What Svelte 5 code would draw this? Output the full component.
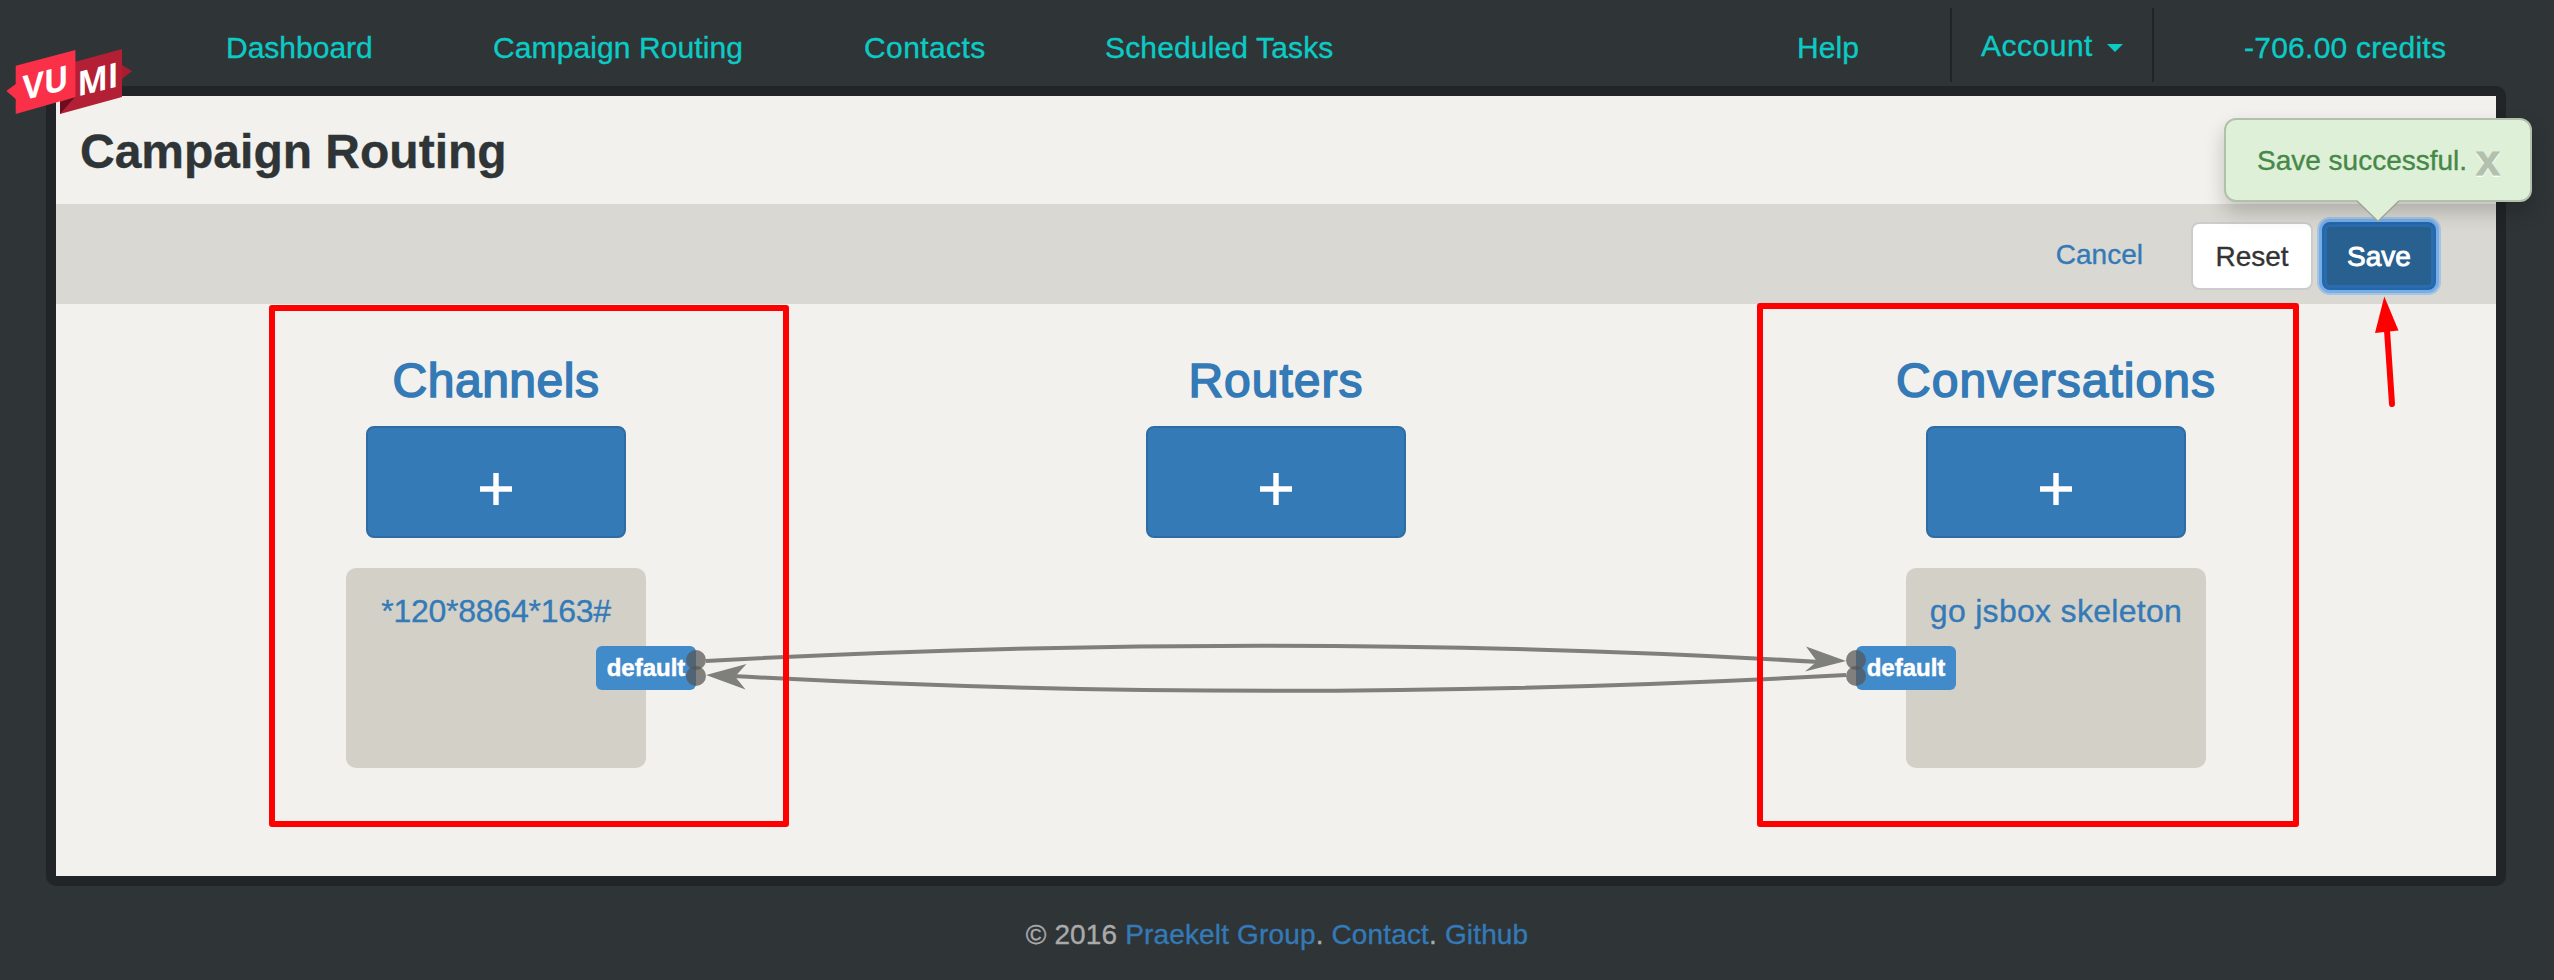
<script>
  const links = [
    { label: 'Dashboard', cls: 'dash' },
    { label: 'Campaign Routing', cls: 'camp' },
    { label: 'Contacts', cls: 'cont' },
    { label: 'Scheduled Tasks', cls: 'tasks' }
  ];
  const columns = [
    { title: 'Channels', node: '*120*8864*163#', side: 'right' },
    { title: 'Routers' },
    { title: 'Conversations', node: 'go jsbox skeleton', side: 'left' }
  ];
</script>

<div class="page">
  <header>
    <svg class="logo" width="140" height="80" viewBox="0 40 140 80">
      <path d="M122 65L132 71L122 79Z" fill="#a81e30" />
      <path d="M60 66L122 49V97L60 114Z" fill="#b32035" />
      <path d="M60 102L75 97L60 114Z" fill="#6b0f20" />
      <path d="M15.7 65.7L75.4 50V97L15.7 114V99L6.4 91L15.7 84Z" fill="#fa3049" />
      <text transform="matrix(1 -.25 0 1 22.5 100.5)" font-size="34" textLength="46" lengthAdjust="spacingAndGlyphs">VU</text>
      <text transform="matrix(1 -.25 0 1 77.5 96.5)" font-size="34" textLength="41" lengthAdjust="spacingAndGlyphs">MI</text>
    </svg>
    <nav class="main">
      {#each links as l}<a class={l.cls}>{l.label}</a>{/each}
    </nav>
    <nav class="side">
      <a class="help">Help</a>
      <div class="account">Account<span class="caret"></span></div>
      <a class="credits">-706.00 credits</a>
    </nav>
  </header>

  <main>
    <h1>Campaign Routing</h1>
    <div class="toolbar">
      <a class="cancel">Cancel</a>
      <button class="reset">Reset</button>
      <button class="save">Save</button>
      <div class="popover">
        <span>Save successful.</span><b>x</b>
        <svg class="tip" width="42" height="22" viewBox="0 0 42 22"><path d="M0 0L21 21L42 0Z" fill="#dff0d8" /><path d="M0 1L21 21.3L42 1" fill="none" stroke="#a0a59b" stroke-width="1.3" /></svg>
      </div>
    </div>
    <div class="canvas">
      {#each columns as c}
        <section class={c.title.toLowerCase()}>
          <h2>{c.title}</h2>
          <button class="add" aria-label="Add"><svg width="32" height="32"><path d="M0 16H32M16 0V32" stroke="#fff" stroke-width="5.4" /></svg></button>
          {#if c.node}
            <div class="node">
              <span>{c.node}</span>
              <div class="port {c.side}">default</div>
            </div>
          {/if}
        </section>
      {/each}
    </div>
  </main>

  <footer>© 2016 <a>Praekelt Group</a>. <a>Contact</a>. <a>Github</a></footer>

  <svg class="overlay" width="2554" height="980" viewBox="0 0 2554 980">
    <g fill="none" stroke="#7f7f7c" stroke-width="4">
      <path d="M706 661Q1276 630 1820 662" />
      <path d="M1846 675Q1276 706 732 676" />
    </g>
    <g fill="#7f7f7c">
      <path d="M706 675L746.5 664L735 676.5L745.5 689.5Z" />
      <path d="M1846 661L1806 646.5L1817 661.5L1805 671.5Z" />
    </g>
    <g fill="#555" fill-opacity=".72">
      <circle cx="696" cy="660" r="10" /><circle cx="696" cy="676" r="10" />
      <circle cx="1856" cy="660" r="10" /><circle cx="1856" cy="676" r="10" />
    </g>
    <g fill="none" stroke="#f00" stroke-width="6" stroke-linejoin="round">
      <rect x="272" y="308" width="514" height="516" />
      <rect x="1760" y="306" width="536" height="518" />
      <path d="M2387 330L2392 404" stroke-linecap="round" />
    </g>
    <path d="M2384.3 296.5L2398.5 330.5L2375 333Z" fill="#f00" />
  </svg>
</div>

<style>
  :global(body) { background: #2f3437; }
  .page { position: relative; width: 2554px; height: 980px; overflow: hidden; background: #2f3437; font-family: "Liberation Sans", Arial, sans-serif; font-size: 28px; line-height: 40px; color: #333; -webkit-text-stroke: .35px currentColor; }
  a { color: #337ab7; }
  button { font: inherit; }
  header { height: 86px; display: flex; justify-content: space-between; font-size: 30px; }
  header a, .account { color: #0ccbc5; white-space: nowrap; }
  .logo { position: absolute; left: 0; top: 40px; z-index: 3; fill: #fff; font-weight: bold; font-family: "Open Sans", sans-serif; -webkit-text-stroke: 0; }
  .main { display: flex; padding: 28px 0 0 226px; }
  .dash { width: 267px; }
  .camp { width: 371px; letter-spacing: .1px; }
  .cont { width: 241px; letter-spacing: .4px; }
  .tasks { letter-spacing: .15px; }
  .side { display: flex; }
  .side a { padding-top: 28px; }
  .help { width: 153px; letter-spacing: .1px; }
  .account { box-sizing: border-box; margin-top: 8px; height: 74px; width: 204px; border: solid #212528; border-width: 0 2px; padding: 18px 0 0 29px; display: flex; letter-spacing: .5px; }
  .caret { margin: 18px 0 0 14px; width: 0; height: 0; border: 8px solid transparent; border-top-color: #0ccbc5; border-bottom: 0; }
  .credits { width: 400px; box-sizing: border-box; padding-left: 90px; letter-spacing: .25px; }
  main { box-sizing: border-box; margin: 0 48px 0 46px; height: 800px; border: 10px solid #212528; border-radius: 10px; background: #f2f1ed; }
  h1 { margin: 0; height: 108px; box-sizing: border-box; padding: 29px 0 0 24px; font-size: 48px; line-height: 53px; color: #2f3437; }
  .toolbar { position: relative; height: 100px; box-sizing: border-box; background: #d9d8d2; display: flex; justify-content: flex-end; padding: 18px 60px 0 0; }
  .cancel { margin: 13px 48px 0 0; }
  .toolbar button { box-sizing: border-box; height: 68px; border: 2px solid #ccc; border-radius: 8px; padding: 1px 0 0; -webkit-text-stroke: .35px currentColor; }
  .reset { width: 122px; background: #fff; color: #333; margin-right: 9px; }
  .toolbar .save { width: 114px; background: #286090; border-color: #2467ad; color: #fff; -webkit-text-stroke: .9px #fff; box-shadow: inset 0 0 0 3px #2a6cae, 0 0 0 3px #76aeea, 0 0 0 5px rgba(118, 174, 234, .5); }
  .popover { position: absolute; z-index: 5; left: 2168px; top: -86px; width: 308px; height: 84px; box-sizing: border-box; border: 2px solid #b2c0ac; border-radius: 12px; background: #dff0d8; color: #468847; padding: 21px 0 0 31px; display: flex; box-shadow: 0 10px 20px rgba(0, 0, 0, .2); }
  .popover b { font-size: 43px; line-height: 38px; margin-left: 9px; color: #b2c0ad; text-shadow: 0 2px #fff; -webkit-text-stroke: .8px #b2c0ad; }
  .tip { position: absolute; left: 131px; top: 80px; }
  .canvas { display: grid; grid-template-columns: repeat(3, 780px); justify-content: center; }
  section { display: flex; flex-direction: column; align-items: center; padding-top: 50px; }
  h2 { margin: 0; height: 72px; font-size: 48px; line-height: 53px; font-weight: 400; color: #337ab7; letter-spacing: 1px; -webkit-text-stroke: 1.6px #337ab7; }
  .channels h2 { letter-spacing: .5px; }
  .add { box-sizing: border-box; width: 260px; height: 112px; padding: 13px 0 0; border: 2px solid #2e6da4; border-radius: 8px; background: #337ab7; display: flex; align-items: center; justify-content: center; }
  .node { position: relative; margin-top: 30px; width: 300px; height: 200px; box-sizing: border-box; padding-top: 23px; border-radius: 10px; background: #d3d0c8; color: #337ab7; font-size: 32px; text-align: center; white-space: nowrap; }
  .channels .node span { letter-spacing: -.25px; }
  .conversations .node span { letter-spacing: .3px; }
  .port { position: absolute; top: 78px; width: 100px; height: 44px; border-radius: 6px; background: #428bca; color: #fff; font-size: 24px; line-height: 44px; font-weight: bold; -webkit-text-stroke: .5px #fff; }
  .port.right { right: -50px; }
  .port.left { left: -50px; }
  footer { padding-top: 29px; text-align: center; color: #aaa; letter-spacing: .15px; }
  .overlay { position: absolute; left: 0; top: 0; z-index: 4; pointer-events: none; }
</style>
